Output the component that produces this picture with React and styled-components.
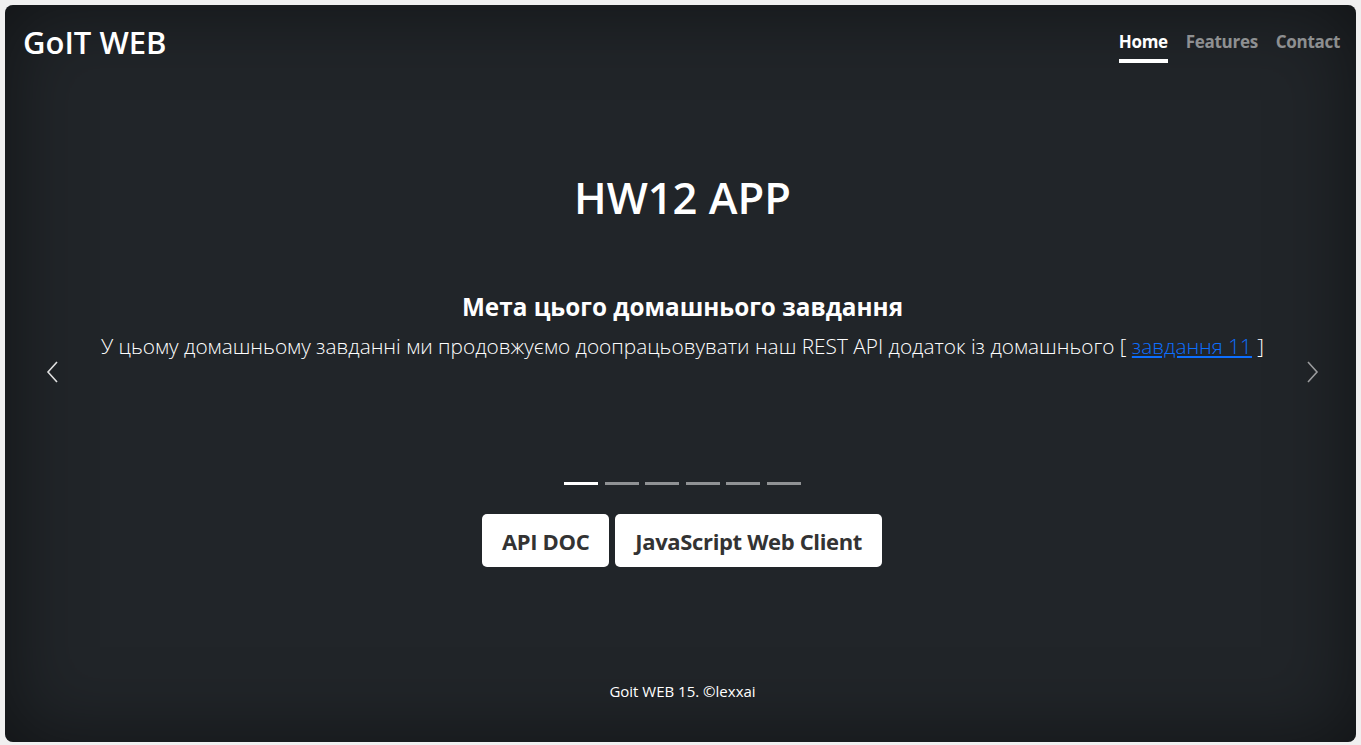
import React from "react";
import styled, { createGlobalStyle } from "styled-components";

const GlobalStyle = createGlobalStyle`
  html, body {
    margin: 0;
    height: 100%;
  }
  body {
    background: #f0f0f0;
    font-family: "Open Sans", "Noto Sans", "Liberation Sans", sans-serif;
    color: #fff;
  }
  #root {
    height: 100%;
  }
`;

const Frame = styled.div`
  box-sizing: border-box;
  height: 100%;
  padding: 5px 5px 3px 5px;
`;

const Cover = styled.div`
  box-sizing: border-box;
  height: 100%;
  display: flex;
  flex-direction: column;
  padding: 16px;
  background: #212529;
  border-radius: 8px;
  box-shadow: inset 0 0 5rem rgba(0, 0, 0, 0.5);
`;

const Header = styled.header`
  display: flex;
  align-items: center;
  justify-content: space-between;
  height: 42px;
`;

const Brand = styled.h3`
  margin: 0 0 0 2px;
  font-size: 31px;
  font-weight: 600;
`;

const Nav = styled.nav`
  display: flex;
  gap: 18px;
  margin-top: 7px;
`;

const NavLink = styled.a`
  padding: 0 0 4px;
  font-size: 17px;
  font-weight: 700;
  line-height: 26px;
  color: ${(p) => (p.$active ? "#fff" : "rgba(255,255,255,0.5)")};
  border-bottom: 4px solid ${(p) => (p.$active ? "#fff" : "transparent")};
  text-decoration: none;
  letter-spacing: -0.3px;
`;

const Main = styled.main`
  flex: 1;
  display: flex;
  flex-direction: column;
  align-items: center;
`;

const Title = styled.h1`
  margin: 108px 0 0 4px;
  font-size: 43.5px;
  font-weight: 600;
  line-height: 54px;
`;

const Carousel = styled.div`
  position: relative;
  align-self: stretch;
  height: 244px;
  margin-top: 25px;
`;

const Caption = styled.div`
  padding: 42px 0 0 4px;
  text-align: center;
`;

const CaptionTitle = styled.h5`
  margin: 0;
  font-size: 24.3px;
  font-weight: 700;
  line-height: 29px;
`;

const Lead = styled.p`
  margin: 10px 0 0;
  font-size: 20.8px;
  font-weight: 300;
  line-height: 30px;
`;

const TaskLink = styled.a`
  color: #0d6efd;
`;

const Control = styled.button`
  position: absolute;
  top: 0;
  bottom: 0;
  ${(p) => (p.$side === "left" ? "left: 0;" : "right: 0;")}
  width: ${(p) => (p.$side === "left" ? "63px" : "56px")};
  display: flex;
  align-items: center;
  justify-content: center;
  background: none;
  border: 0;
  padding: 0;
  color: ${(p) => (p.$side === "left" ? "#e0e0e0" : "#9a9b9d")};
  cursor: pointer;
`;

const Indicators = styled.div`
  position: absolute;
  left: 4px;
  right: 0;
  bottom: 9px;
  display: flex;
  justify-content: center;
  gap: 6.6px;
`;

const Indicator = styled.span`
  width: 34px;
  height: 3px;
  background: ${(p) => (p.$active ? "#fff" : "rgba(255,255,255,0.5)")};
`;

const Buttons = styled.div`
  display: flex;
  gap: 6px;
  margin: 20px 0 0 3px;
`;

const Button = styled.a`
  display: flex;
  align-items: center;
  height: 53px;
  padding: 0 20px;
  box-sizing: border-box;
  background: #fff;
  color: #333;
  border-radius: 5px;
  font-size: 22px;
  font-weight: 700;
  text-decoration: none;
  letter-spacing: -0.35px;
`;

const Footer = styled.footer`
  padding: 0 0 24px 4px;
  text-align: center;
  font-size: 15px;
  line-height: 22px;
`;

const Chevron = ({ dir }) => (
  <svg width="14" height="22" viewBox="0 0 14 22" fill="none">
    <polyline
      points={dir === "left" ? "11,1 2,11 11,21" : "3,1 12,11 3,21"}
      stroke="currentColor"
      strokeWidth="1.6"
    />
  </svg>
);

export default function App() {
  return (
    <>
      <GlobalStyle />
      <Frame>
        <Cover>
          <Header>
            <Brand>GoIT WEB</Brand>
            <Nav>
              <NavLink $active href="#">Home</NavLink>
              <NavLink href="#">Features</NavLink>
              <NavLink href="#">Contact</NavLink>
            </Nav>
          </Header>
          <Main>
            <Title>HW12 APP</Title>
            <Carousel>
              <Caption>
                <CaptionTitle>Мета цього домашнього завдання</CaptionTitle>
                <Lead>
                  У цьому домашньому завданні ми продовжуємо доопрацьовувати наш REST API
                  додаток із домашнього [ <TaskLink href="#">завдання 11</TaskLink> ]
                </Lead>
              </Caption>
              <Control $side="left">
                <Chevron dir="left" />
              </Control>
              <Control $side="right">
                <Chevron dir="right" />
              </Control>
              <Indicators>
                {[0, 1, 2, 3, 4, 5].map((i) => (
                  <Indicator key={i} $active={i === 0} />
                ))}
              </Indicators>
            </Carousel>
            <Buttons>
              <Button href="#">API DOC</Button>
              <Button href="#">JavaScript Web Client</Button>
            </Buttons>
          </Main>
          <Footer>Goit WEB 15. ©lexxai</Footer>
        </Cover>
      </Frame>
    </>
  );
}
